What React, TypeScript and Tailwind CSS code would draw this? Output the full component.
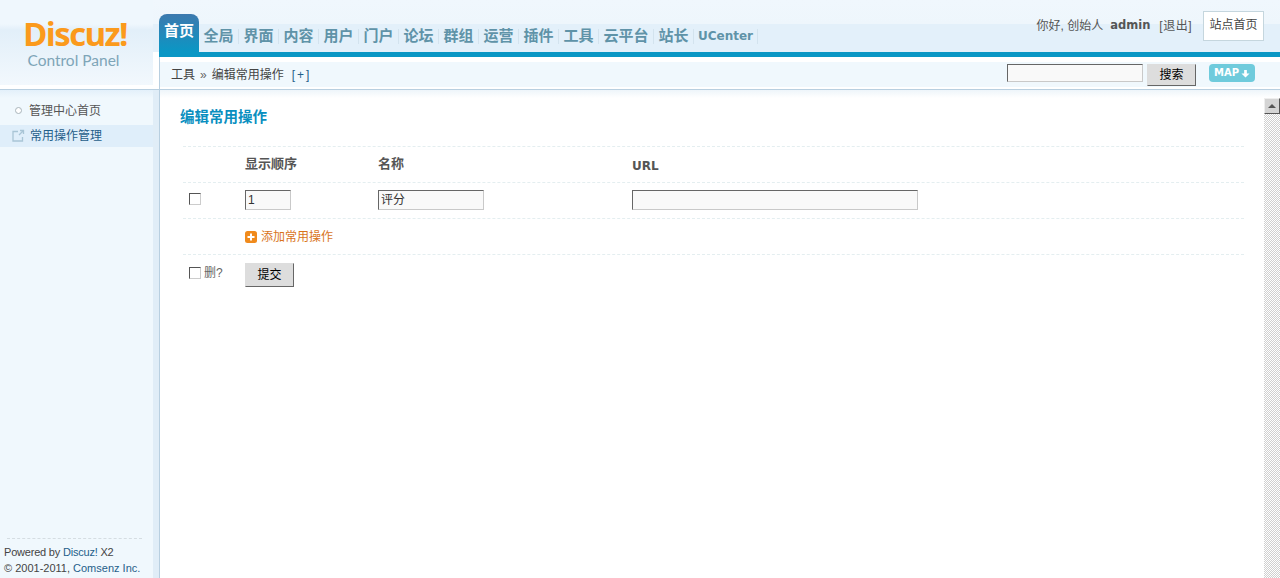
import React from 'react';

const navItems = ['全局', '界面', '内容', '用户', '门户', '论坛', '群组', '运营', '插件', '工具'];
const cjk = "font-['Liberation_Sans','Noto_Sans_CJK_SC',sans-serif]";

function TextInput({ className, value }: { className: string; value?: string }) {
  return (
    <input
      readOnly
      value={value ?? ''}
      className={`border border-[#c9c9c9] border-t-[#666] border-l-[#666] bg-[#f9f9f9] px-[2px] text-xs text-[#333] outline-none ${className}`}
    />
  );
}

function Button({ label, className }: { label: string; className: string }) {
  return (
    <button
      type="button"
      className={`border border-[#ddd] border-r-[#666] border-b-[#666] bg-[#ddd] text-xs text-black ${className}`}
    >
      {label}
    </button>
  );
}

function Checkbox() {
  return <span className="block h-[12px] w-[12px] border border-[#ccc] border-t-[#555] border-l-[#555] bg-white" />;
}

function NavItem({ label, className }: { label: string; className: string }) {
  return (
    <a className={`flex h-[38px] items-center justify-center pt-[6px] text-[15px] font-bold text-[#5f93a8] ${className}`}>
      <span className="flex h-[15px] w-full items-center justify-center border-r border-[#d3e3ee]">{label}</span>
    </a>
  );
}

function Header() {
  return (
    <header className="flex h-[90px] shrink-0 border-b border-[#b8cfe0]">
      {/* logo */}
      <div className="flex w-[153px] shrink-0 flex-col items-center bg-[linear-gradient(#eff7fd_0,#eff7fd_24px,#e2eff9_30px,#f2f8fd_85px,#ffffff_85px)] pt-[17px]">
        <div className="mr-[3px] flex h-[34px] items-center font-['Open_Sans',sans-serif] text-[33px] leading-[34px] font-bold tracking-[-1.6px] text-[#fb9a1c]">
          Discuz!
        </div>
        <div className="mr-[6px] font-['Lato',sans-serif] text-[15.5px] leading-[18px] text-[#7ea5b8]">Control Panel</div>
      </div>
      {/* right side */}
      <div className="flex min-w-0 flex-1 flex-col">
        <div className="flex h-[52px] justify-between bg-[linear-gradient(#f0f7fd_0,#eef6fc_24px,#e3f0fa_24px,#e3f0fa_52px)] pl-[6px]">
          <nav className="flex items-end">
            <a className="flex h-[38px] w-[40px] items-center justify-center rounded-t-[8px] bg-[linear-gradient(#3d79ae,#0a97c5)] pb-[4px] text-[15px] font-bold text-white">
              首页
            </a>
            {navItems.map(item => (
              <NavItem key={item} label={item} className="w-[40px]" />
            ))}
            <NavItem label="云平台" className="w-[55px]" />
            <NavItem label="站长" className="w-[40px]" />
            <a className="flex h-[38px] items-center pt-[6px] font-['DejaVu_Sans',sans-serif] text-[12px] font-bold text-[#5f93a8]">
              <span className="flex h-[15px] w-[64px] items-center justify-center border-r border-[#d3e3ee]">UCenter</span>
            </a>
          </nav>
          <div className="flex items-start pt-[11px] pr-[16px] text-xs text-[#555]">
            <span className="mt-[7px]">你好, 创始人</span>
            <b className="mt-[7px] ml-[7px] font-['DejaVu_Sans',sans-serif] text-[11.5px] text-[#555]">admin</b>
            <span className="mt-[7px] ml-[9px] tracking-[0.5px]">[退出]</span>
            <a className="ml-[11px] flex h-[30px] w-[61px] items-center justify-center border border-[#c5d6de] bg-white pb-[2px] text-[#444]">
              站点首页
            </a>
          </div>
        </div>
        <div className="ml-[6px] h-[5px] bg-[#0a97c5]" />
        <div className="ml-[6px] flex-1 border-l border-[#b8cfe0] pt-[5px]">
          <div className="flex h-[25px] items-center justify-between bg-[#f0f8fd] pl-[11px] text-xs text-[#444]">
            <div className="flex items-center">
              <span>工具</span>
              <span className="mx-[5px] text-[#666]">»</span>
              <span>编辑常用操作</span>
              <a className="ml-[8px] tracking-[2px] text-[#1f5f8a]">[+]</a>
            </div>
            <div className="flex items-start pr-[25px]">
              <TextInput className="mt-[1px] h-[18px] w-[136px]" />
              <Button label="搜索" className="mt-[1px] ml-[4px] h-[22px] w-[49px]" />
              <a className="mt-[1px] ml-[13px] flex h-[18px] w-[46px] items-center justify-center rounded-[4px] bg-[#6fcbdc] font-['DejaVu_Sans',sans-serif] text-[10px] font-bold text-white">
                MAP
                <svg viewBox="0 0 10 10" className="ml-[2px] h-[9px] w-[9px]" fill="currentColor">
                  <path d="M3.5 1h3v4H9.5L5 9.5.5 5h3z" />
                </svg>
              </a>
            </div>
          </div>
        </div>
      </div>
    </header>
  );
}

function Sidebar() {
  return (
    <aside className="flex w-[160px] shrink-0 border-r border-[#b8cfe0] bg-[linear-gradient(#e3f0fa,#f0f8fd_8px)]">
      <div className="flex w-[153px] flex-col pt-[8px] text-xs">
        <a className="flex h-[25px] items-center text-[#555]">
          <span className="ml-[15px] h-[7px] w-[7px] rounded-full border border-[#a9b4ba] bg-white" />
          <span className="ml-[7px]">管理中心首页</span>
        </a>
        <a className="mt-[2px] flex h-[22px] items-center bg-[#dfeefa] text-[#1f5f8a]">
          <svg viewBox="0 0 14 14" className="ml-[11px] h-[14px] w-[14px]" fill="none" stroke="#a9c5d6" strokeWidth="1.3">
            <path d="M7 2.5H2v9.5h9.5V8M8 6l4.5-4.5M9 1.5h3.5V5" />
          </svg>
          <span className="ml-[5px]">常用操作管理</span>
        </a>
        <div className="mt-auto mb-[2px] ml-[7px] w-[135px] border-t border-dashed border-[#d5dde2] pt-[5px] font-['Liberation_Sans',sans-serif] text-[11px] leading-[16px] whitespace-nowrap text-[#444]">
          <div className="-ml-[3px] tracking-[-0.2px]">
            Powered by <a className="text-[#1f5f8a]">Discuz!</a> X2
          </div>
          <div className="-ml-[3px]">
            © 2001-2011, <a className="text-[#1f5f8a]">Comsenz Inc.</a>
          </div>
        </div>
      </div>
      <div className="w-[6px] bg-[#e0edf7]" />
    </aside>
  );
}

function Row({ children, className = 'h-[36px]' }: { children: React.ReactNode; className?: string }) {
  return (
    <div className={`grid grid-cols-[62px_133px_254px_1fr] items-center border-t border-dashed border-[#e4eef0] ${className}`}>
      {children}
    </div>
  );
}

function Content() {
  return (
    <main className="flex min-w-0 flex-1 flex-col bg-[linear-gradient(#eef5fa,#ffffff_8px)]">
      <div className="pt-[17px] pb-[19px] pl-[20px] text-[14.5px] leading-[20px] font-bold text-[#0a8fbf]">编辑常用操作</div>
      <div className="mr-[20px] ml-[23px] text-xs text-[#444]">
        <Row>
          <span />
          <b className="mb-[2px] text-[13px] text-[#555]">显示顺序</b>
          <b className="mb-[2px] text-[13px] text-[#555]">名称</b>
          <b className="mt-[2px] font-['DejaVu_Sans',sans-serif] text-[#555]">URL</b>
        </Row>
        <Row>
          <span className="mb-[4px] pl-[6px]">
            <Checkbox />
          </span>
          <TextInput className="mb-[2px] h-[20px] w-[46px]" value="1" />
          <TextInput className="mb-[2px] h-[20px] w-[106px] pb-[3px]" value="评分" />
          <TextInput className="mb-[2px] h-[20px] w-[286px]" />
        </Row>
        <Row>
          <span />
          <a className="col-span-3 flex items-center text-[#d9741c]">
            <svg viewBox="0 0 12 12" className="h-[12px] w-[12px]">
              <rect width="12" height="12" rx="2.5" fill="#f08a1c" />
              <path d="M5 2.5h2V5h2.5v2H7v2.5H5V7H2.5V5H5z" fill="#fff" />
            </svg>
            <span className="ml-[4px]">添加常用操作</span>
          </a>
        </Row>
        <Row className="h-[41px]">
          <span className="mb-[4px] flex items-center pl-[6px] text-[#666]">
            <Checkbox />
            <span className="ml-[3px]">删?</span>
          </span>
          <Button label="提交" className="h-[24px] w-[49px]" />
        </Row>
      </div>
    </main>
  );
}

function Scrollbar() {
  return (
    <div className="flex w-[16px] shrink-0 flex-col">
      <div className="h-[8px] bg-[linear-gradient(#eef5fa,#ffffff)]" />
      <div className="flex h-[16px] items-center justify-center border border-[#eee] border-r-[#555] border-b-[#555] bg-[#d4d4d4]">
        <span className="border-x-[4px] border-b-[4px] border-x-transparent border-b-[#555]" />
      </div>
      <div className="flex-1 bg-[repeating-conic-gradient(#d0d0d0_0_25%,#ffffff_0_50%)] bg-[length:2px_2px]" />
    </div>
  );
}

export default function App() {
  return (
    <div className={`flex h-[578px] w-[1280px] flex-col overflow-hidden bg-white ${cjk}`}>
      <Header />
      <div className="flex min-h-0 flex-1">
        <Sidebar />
        <Content />
        <Scrollbar />
      </div>
    </div>
  );
}
